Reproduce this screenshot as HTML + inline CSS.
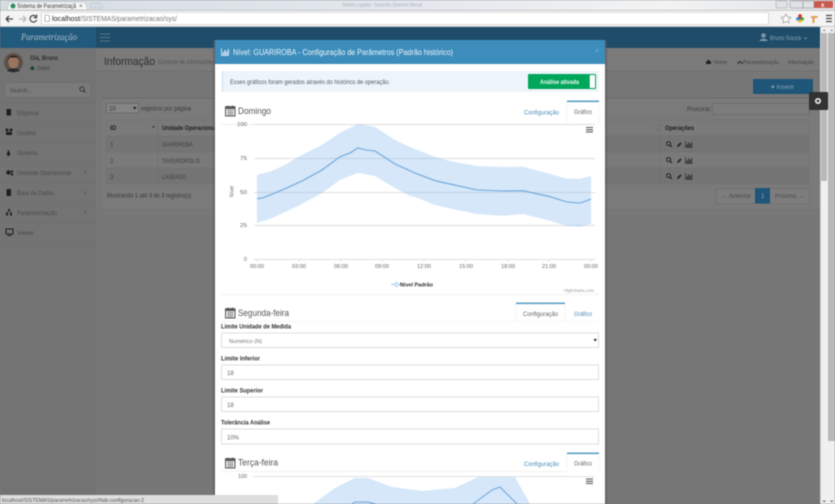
<!DOCTYPE html>
<html lang="pt"><head><meta charset="utf-8"><title>Sistema de Parametrização</title>
<style>
html,body{margin:0;padding:0;width:835px;height:504px;overflow:hidden;background:#777}
svg{display:block;filter:blur(.5px)}
text{font-family:"Liberation Sans",sans-serif;white-space:pre}
</style></head><body>
<svg xmlns="http://www.w3.org/2000/svg" width="835" height="504" viewBox="0 0 835 504">
<defs>
<linearGradient id="top" x1="0" x2="1" y1="0" y2="0"><stop offset="0" stop-color="#d6dde2"/><stop offset=".5" stop-color="#e4e8ee"/><stop offset=".8" stop-color="#f3f3f3"/><stop offset="1" stop-color="#dfe3e8"/></linearGradient>
<g id="cal"><rect x="0" y="1.2" width="9.5" height="9.3" fill="none" stroke="#555" stroke-width="1"/><rect x="0" y="1" width="9.5" height="2.6" fill="#555"/><rect x="2" y="0" width="1.2" height="2" fill="#555"/><rect x="6.3" y="0" width="1.2" height="2" fill="#555"/><path d="M1.2 5.2h7.2M1.2 7.2h7.2M1.2 9h7.2M3 4v6M4.8 4v6M6.6 4v6" stroke="#777" stroke-width=".6"/></g>
<g id="ops"><circle cx="2.6" cy="2.6" r="2" fill="none" stroke="#222" stroke-width="1"/><path d="M4 4l2 2" stroke="#222" stroke-width="1.2"/><path d="M11 6l.4-1.6 3-3 1.2 1.2-3 3z" fill="#222"/><path d="M19.5 0v6.3h7.5" fill="none" stroke="#2a2a2a" stroke-width=".7"/><path d="M21 6V3.5M22.5 6V1.5M24 6V2.8M25.5 6V1" stroke="#2a2a2a" stroke-width="1"/></g>
</defs>

<!-- page background -->
<rect width="835" height="504" fill="#777"/>

<!-- browser chrome -->
<rect width="835" height="10" fill="url(#top)"/>
<path d="M7 10l2-8h76l3 8z" fill="#f6f6f6" stroke="#a8aeb4" stroke-width=".5"/>
<path d="M90 8l1-5h9l3 5z" fill="#d3dde6" stroke="#b0b8c0" stroke-width=".4"/>
<circle cx="13" cy="6" r="2.5" fill="#2f8a63"/>
<text x="17" y="8" font-size="6" fill="#333" textLength="59" lengthAdjust="spacingAndGlyphs">Sistema de Parametrizaçã</text>
<text x="79" y="8" font-size="6" fill="#555">×</text>
<text x="342" y="6.5" font-size="5" fill="#98a0a8" textLength="80" lengthAdjust="spacingAndGlyphs" opacity=".75">Sistema Legados - Guariroba, Elemento Manual</text>
<rect y="10" width="835" height="17" fill="#f4f4f4"/>
<rect y="10" width="835" height=".7" fill="#b6b6b6"/>
<rect y="26" width="835" height="1" fill="#c8c8c8"/>
<rect x="776" y="1" width="11" height="7" rx="1" fill="#dfe3e8" stroke="#999" stroke-width=".5"/>
<rect x="790" y="1" width="13" height="7" rx="1" fill="#dfe3e8" stroke="#888" stroke-width=".5"/>
<rect x="803" y="1" width="11" height="7" fill="#dfe3e8" stroke="#888" stroke-width=".5"/>
<rect x="814" y="1" width="19" height="7" rx="1" fill="#c85a50"/>
<text x="821" y="7" font-size="6" fill="#fff" font-weight="bold">x</text>
<path d="M6 19h7M6 19l3-3M6 19l3 3" fill="none" stroke="#444" stroke-width="1.3"/>
<path d="M19 19h7M26 19l-3-3M26 19l-3 3" fill="none" stroke="#bbb" stroke-width="1.3"/>
<path d="M36 16.5a3.4 3.4 0 1 0 .6 3.5M36.6 14.6v3h-3" fill="none" stroke="#444" stroke-width="1.2"/>
<rect x="41.5" y="12.5" width="727" height="12" rx="1" fill="#fff" stroke="#c4c4c4" stroke-width=".6"/>
<path d="M45 15h3l1.5 1.5v5H45z" fill="#fff" stroke="#888" stroke-width=".6"/>
<text x="52" y="21" font-size="7.5" fill="#222" textLength="28" lengthAdjust="spacingAndGlyphs">localhost</text>
<text x="80" y="21" font-size="7.5" fill="#777" textLength="97" lengthAdjust="spacingAndGlyphs">/SISTEMAS/parametrizacao/sys/</text>
<path d="M786 14l1.5 3 3.3.4-2.4 2.3.6 3.3-3-1.6-3 1.6.6-3.3-2.4-2.3 3.3-.4z" fill="#fff" stroke="#999" stroke-width=".7"/>
<circle cx="800" cy="16" r="1.9" fill="#e4312b"/><circle cx="798" cy="19" r="1.9" fill="#3a8fe0"/><circle cx="802" cy="19" r="1.9" fill="#43b02a"/><circle cx="800" cy="21" r="1.8" fill="#f6c21c"/><circle cx="800" cy="18.6" r="1" fill="#6a2a90"/>
<path d="M811 16h6.5v2h-3v5h-2v-5h-1.5z" fill="#e0a050"/>
<path d="M826 15.5h6M826 18.5h6M826 21.5h6" stroke="#444" stroke-width="1.3"/>

<!-- top nav -->
<rect y="27" width="835" height="21" fill="#1e4c69"/>
<rect y="27" width="96" height="21" fill="#225a7e"/>
<path d="M100 34h10M100 37.5h10M100 41h10" stroke="#56788f" stroke-width="1"/>
<text x="21" y="40" font-size="9" font-style="italic" fill="#aebfca" textLength="56" lengthAdjust="spacingAndGlyphs" style="font-family:'Liberation Serif',serif">Parametrização</text>
<circle cx="763.5" cy="35.5" r="2.3" fill="#7f97a7"/><path d="M759.5 41c0-3 8-3 8 0z" fill="#7f97a7"/>
<text x="770" y="40" font-size="6.3" fill="#8ea4b3" textLength="31" lengthAdjust="spacingAndGlyphs">Bruno Souza</text>
<path d="M804 37.5l1.5 1.5 1.5-1.5" fill="none" stroke="#8ea4b3" stroke-width=".7"/>

<!-- sidebar -->
<rect y="48" width="96" height="456" fill="#737373"/>
<circle cx="13.5" cy="62.5" r="9.5" fill="#5c5148"/>
<ellipse cx="13.5" cy="62" rx="5.2" ry="6.5" fill="#9a7460"/>
<path d="M8 60c0-6 11-6 11 0l-2-2.500h-7z" fill="#2c2320"/>
<path d="M7 71c2-3.500 11-3.500 13 0l-6.500 1.500z" fill="#2b2b2f"/>
<text x="30" y="60" font-size="6.300" font-weight="bold" fill="#2e2e2e" textLength="28" lengthAdjust="spacingAndGlyphs">Olá, Bruno</text>
<circle cx="32.300" cy="68.200" r="1.800" fill="#153f29"/>
<text x="37" y="70" font-size="5.500" fill="#3c3c3c" textLength="13" lengthAdjust="spacingAndGlyphs">Online</text>
<rect x="4.500" y="82.500" width="86" height="15" fill="#7a7a7a" stroke="#6c6c6c" stroke-width=".6"/>
<text x="10" y="92.500" font-size="6.800" fill="#494949" textLength="22" lengthAdjust="spacingAndGlyphs">Search...</text>
<circle cx="82" cy="89" r="2.200" fill="none" stroke="#333" stroke-width=".9"/><path d="M83.600 90.600l2 2" stroke="#333" stroke-width="1"/>
<path d="M0 102.500h96M0 122.500h96M0 142.500h96M0 162.500h96M0 182.500h96M0 202.500h96M0 222.500h96M0 242.500h96" stroke="#6d6d6d" stroke-width=".5"/>
<g fill="#4a4a4a" font-size="6.800">
<text x="17" y="115" textLength="21" lengthAdjust="spacingAndGlyphs">Empresa</text>
<text x="17" y="135" textLength="19" lengthAdjust="spacingAndGlyphs">Usuário</text>
<text x="17" y="155" textLength="20" lengthAdjust="spacingAndGlyphs">Sistema</text>
<text x="17" y="175" textLength="54" lengthAdjust="spacingAndGlyphs">Unidade Operacional</text>
<text x="17" y="195" textLength="37" lengthAdjust="spacingAndGlyphs">Base de Dados</text>
<text x="17" y="215" textLength="40" lengthAdjust="spacingAndGlyphs">Parametrização</text>
<text x="17" y="235" textLength="17" lengthAdjust="spacingAndGlyphs">Viewer</text>
</g>
<g fill="#1f1f1f">
<rect x="6.500" y="109" width="4.500" height="6.500"/>
<circle cx="7" cy="130" r="1.500"/><circle cx="11" cy="130" r="1.500"/><rect x="6" y="132" width="6" height="3"/>
<path d="M8.500 149.500l2 5h-4z"/><rect x="7.500" y="154" width="2" height="2"/>
<circle cx="8.500" cy="172.500" r="2.200"/><circle cx="12" cy="171.500" r="1.200"/><circle cx="12" cy="174.500" r="1.200"/>
<rect x="6.500" y="189" width="4.500" height="7" rx="1"/>
<path d="M8 209h2v2H8zM6 213h2v2.500H6zM10 213h2v2.500h-2z"/><path d="M7 213v-1h4v1" fill="none" stroke="#1f1f1f" stroke-width=".6"/>
<rect x="6" y="229" width="7" height="5" fill="none" stroke="#1f1f1f"/><rect x="7.500" y="235" width="4" height="1"/>
</g>
<path d="M86 171l-1.500 1.500 1.500 1.500M86 191l-1.500 1.500 1.500 1.500M86 211l-1.500 1.500 1.500 1.500" fill="none" stroke="#505050" stroke-width=".6"/>

<!-- content header -->
<rect x="96" y="48" width="724" height="23" fill="#7a7a7a"/>
<rect x="96" y="70.500" width="724" height=".6" fill="#6c6c6c"/>
<text x="104" y="65" font-size="11" fill="#2f2f2f" textLength="51" lengthAdjust="spacingAndGlyphs">Informação</text>
<text x="158" y="64" font-size="6.300" fill="#535353" textLength="57" lengthAdjust="spacingAndGlyphs">Controle de informações</text>
<path d="M706 62l2.500-2.500 2.500 2.500v2h-5z" fill="#222"/>
<text x="714" y="64" font-size="5.500" fill="#414141" textLength="13" lengthAdjust="spacingAndGlyphs">Home</text>
<path d="M738 64v-1.500h4V64M740 60.500v2" fill="none" stroke="#333" stroke-width="1"/>
<text x="743" y="64" font-size="5.500" fill="#414141" textLength="36" lengthAdjust="spacingAndGlyphs">Parametrização</text>
<text x="788" y="64" font-size="5.500" fill="#414141" textLength="26" lengthAdjust="spacingAndGlyphs">Informação</text>

<!-- content box -->
<rect x="102" y="98" width="718" height="112" fill="#7a7a7a"/>
<rect x="102" y="97.500" width="718" height="1" fill="#686868"/>
<rect x="102" y="209.500" width="718" height=".6" fill="#707070"/>
<rect x="753" y="79" width="60" height="15" rx="1" fill="#1f5579"/>
<text x="771" y="89" font-size="6.300" fill="#8ba3b3" textLength="23" lengthAdjust="spacingAndGlyphs"><tspan font-weight="bold" fill="#b3c2cc">+</tspan> Inserir</text>

<rect x="106.500" y="103.500" width="32" height="9.500" fill="#858585" stroke="#5e5e5e" stroke-width=".6"/>
<text x="109" y="110.500" font-size="6" fill="#333">10</text>
<path d="M133 107h3.500l-1.750 2.500z" fill="#151515"/>
<text x="141" y="110.500" font-size="6.500" fill="#3a3a3a" textLength="50" lengthAdjust="spacingAndGlyphs">registros por página</text>
<text x="687" y="111" font-size="6.500" fill="#3c3c3c" textLength="25" lengthAdjust="spacingAndGlyphs">Procurar:</text>
<rect x="712.500" y="103.500" width="97" height="11" fill="#7c7c7c" stroke="#666" stroke-width=".6"/>

<rect x="106" y="120" width="703" height="64" fill="#7a7a7a" stroke="#6f6f6f" stroke-width=".6"/>
<rect x="106" y="136" width="703" height="16" fill="#747474"/>
<rect x="106" y="168" width="703" height="16" fill="#747474"/>
<path d="M106 136h703M106 152h703M106 168h703M158 120v64M660 120v64" stroke="#6c6c6c" stroke-width=".6"/>
<g font-size="6.300" font-weight="bold" fill="#202020">
<text x="110" y="130">ID</text>
<text x="162" y="130" textLength="54" lengthAdjust="spacingAndGlyphs">Unidade Operacional</text>
<text x="665" y="130" textLength="29" lengthAdjust="spacingAndGlyphs">Operações</text>
</g>
<path d="M152 127.500l1.500-2 1.500 2z" fill="#30305a"/>
<path d="M656 126.500l1-1.300 1 1.300zM656 129l1 1.300 1-1.300z" fill="#656565"/>
<g font-size="6.300" fill="#404040">
<text x="110" y="146.500">1</text><text x="110" y="163">2</text><text x="110" y="179">3</text>
<text x="162" y="146.500" textLength="31" lengthAdjust="spacingAndGlyphs">GUARIROBA</text>
<text x="162" y="163" textLength="38" lengthAdjust="spacingAndGlyphs">TAVEIROPOLIS</text>
<text x="162" y="179" textLength="24" lengthAdjust="spacingAndGlyphs">LAGEADO</text>
</g>
<use href="#ops" x="666" y="141"/><use href="#ops" x="666" y="157"/><use href="#ops" x="666" y="173"/>
<text x="107" y="197.500" font-size="6.500" fill="#3a3a3a" textLength="84" lengthAdjust="spacingAndGlyphs">Mostrando 1 até 3 de 3 registro(s)</text>
<rect x="716.500" y="188.500" width="93" height="15" fill="#7d7d7d" stroke="#6c6c6c" stroke-width=".6"/>
<rect x="755" y="188" width="15" height="15.500" fill="#1f5579"/>
<text x="721" y="198" font-size="6.300" fill="#4b4b4b" textLength="30" lengthAdjust="spacingAndGlyphs">← Anterior</text>
<text x="761" y="198" font-size="6.300" fill="#92a6b3">1</text>
<text x="775" y="198" font-size="6.300" fill="#4b4b4b" textLength="29" lengthAdjust="spacingAndGlyphs">Próximo →</text>

<!-- page / modal scrollbars -->
<rect x="820" y="27" width="15" height="477" fill="#f0f0f0"/>
<rect x="821" y="33" width="6" height="148" fill="#b9b9b9"/>
<rect x="828" y="33" width="7" height="408" fill="#b9b9b9"/>
<rect x="820" y="27" width="1" height="477" fill="#cfcfcf"/>
<path d="M823 31l1.200-1.300 1.200 1.300M830.500 31l1.200-1.300 1.200 1.300" fill="none" stroke="#777" stroke-width=".6"/>
<path d="M823 500.500l1.200 1.300 1.200-1.300M830.500 500.500l1.200 1.300 1.200-1.300" fill="none" stroke="#555" stroke-width=".8"/>
<!-- settings gear -->
<rect x="809" y="92" width="19" height="18" rx="1" fill="#323232"/>
<circle cx="818" cy="101" r="2.200" fill="none" stroke="#eee" stroke-width="1.700"/>

<!-- modal -->
<rect x="213" y="40" width="394" height="464" fill="#5a5a5a" opacity=".6"/>
<rect x="215" y="40" width="390" height="464" fill="#fff"/>
<rect x="215" y="40" width="390" height="24" fill="#3c8dbc"/>
<path d="M221.500 48.500v7h7" fill="none" stroke="#e8f1f7" stroke-width=".8"/><path d="M223.300 55v-3M225 55v-5M226.700 55v-3.500M228.400 55v-6" stroke="#e8f1f7" stroke-width="1.100"/>
<text x="233" y="55" font-size="8" fill="#eef5fa" textLength="220" lengthAdjust="spacingAndGlyphs">Nível: GUARIROBA - Configuração de Parâmetros (Padrão histórico)</text>
<text x="595" y="53" font-size="7" fill="#7fb4d4">×</text>

<rect x="222" y="71" width="377" height="21" fill="#eef5fa"/>
<rect x="222" y="71" width="1" height="21" fill="#c8dcea"/>
<text x="230" y="84" font-size="6.300" fill="#4f5b63" textLength="160" lengthAdjust="spacingAndGlyphs">Esses gráficos foram gerados através do histórico de operação.</text>
<rect x="528" y="74" width="68" height="15" rx="1" fill="#00a65a"/>
<rect x="589.500" y="74.800" width="5.800" height="13.400" fill="#fff" stroke="#1a9a60" stroke-width=".5"/>
<text x="540" y="84" font-size="6.300" font-weight="bold" fill="#eaf8f1" textLength="39" lengthAdjust="spacingAndGlyphs">Análise ativada</text>

<!-- Domingo -->
<use href="#cal" x="225.500" y="105.500"/>
<text x="238" y="114" font-size="9.500" fill="#555" textLength="33" lengthAdjust="spacingAndGlyphs">Domingo</text>
<rect x="567" y="100.500" width="32" height="1.600" fill="#5a9ec6"/>
<path d="M221 124.500h346.500M599 124.500h0" stroke="#e8e8e8" stroke-width=".7"/>
<path d="M567 102v22M599 102v22" stroke="#f2f2f2" stroke-width=".6"/>
<text x="524" y="114.500" font-size="6.500" fill="#4a8fb8" textLength="35" lengthAdjust="spacingAndGlyphs">Configuração</text>
<text x="574" y="114" font-size="6.500" fill="#666" textLength="18" lengthAdjust="spacingAndGlyphs">Gráfico</text>

<path d="M254 124.500h341M254 158.500h341M254 192.500h341M254 225.500h341M254 259.500h341" stroke="#d8d8d8" stroke-width=".8"/>
<path d="M257 259v3M299 259v3M341 259v3M382 259v3M424 259v3M466 259v3M508 259v3M549 259v3M591 259v3" stroke="#ccc" stroke-width=".5"/>
<polygon fill="#7cb5ec" fill-opacity=".32" points="257,174.700 270,171.700 285,165 298,157 322,145 340,132.700 350,128 358,124 375,127 395,140 410,147 415,149 435,157 453,161.700 477,166 503,167 523,166.700 550,174 567,178.700 580,178.700 591,176 591,224 580,226.700 567,226 550,220.700 523,214 503,215.700 477,214 453,209 435,205 415,197 410,196 395,188 375,176 358,172.700 340,180 322,193 298,206 285,212 270,219 257,222.700"/>
<polyline fill="none" stroke="#6ea6dc" stroke-width="1.100" points="257,198.700 262,198 270,195 285,188.700 302,181 322,170 340,156.700 350,153 358,148 366,150 375,151 395,164 410,170.700 415,173 435,180.700 453,184.700 477,190 490,190.500 503,191 523,190.700 550,196.700 567,202 580,203 586,201 591,199"/>
<g font-size="5.300" fill="#666">
<text x="237" y="126" textLength="10" lengthAdjust="spacingAndGlyphs">100</text>
<text x="240" y="160" textLength="7" lengthAdjust="spacingAndGlyphs">75</text>
<text x="240" y="194" textLength="7" lengthAdjust="spacingAndGlyphs">50</text>
<text x="240" y="227" textLength="7" lengthAdjust="spacingAndGlyphs">25</text>
<text x="244" y="261">0</text>
<text x="250" y="268" textLength="14" lengthAdjust="spacingAndGlyphs">00:00</text>
<text x="292" y="268" textLength="14" lengthAdjust="spacingAndGlyphs">03:00</text>
<text x="334" y="268" textLength="14" lengthAdjust="spacingAndGlyphs">06:00</text>
<text x="375" y="268" textLength="14" lengthAdjust="spacingAndGlyphs">09:00</text>
<text x="417" y="268" textLength="14" lengthAdjust="spacingAndGlyphs">12:00</text>
<text x="459" y="268" textLength="14" lengthAdjust="spacingAndGlyphs">15:00</text>
<text x="501" y="268" textLength="14" lengthAdjust="spacingAndGlyphs">18:00</text>
<text x="542" y="268" textLength="14" lengthAdjust="spacingAndGlyphs">21:00</text>
<text x="584" y="268" textLength="14" lengthAdjust="spacingAndGlyphs">00:00</text>
</g>
<text transform="translate(233.500 197) rotate(-90)" font-size="5.500" fill="#666" textLength="11" lengthAdjust="spacingAndGlyphs">Nível</text>
<path d="M586 127.500h7M586 129.800h7M586 132h7" stroke="#555" stroke-width="1.100"/>
<path d="M391 284.500h3M399 284.500h3" stroke="#7cb5ec" stroke-width=".8"/><path d="M396.500 282.300l2.200 2.200-2.200 2.200-2.200-2.200z" fill="#fff" stroke="#7cb5ec" stroke-width=".7"/>
<text x="400" y="286.500" font-size="5.800" font-weight="bold" fill="#333" textLength="33" lengthAdjust="spacingAndGlyphs">Nível Padrão</text>
<text x="564" y="292" font-size="4.500" fill="#999" textLength="30" lengthAdjust="spacingAndGlyphs">Highcharts.com</text>
<rect x="221" y="294" width="378" height=".7" fill="#ececec"/>

<!-- Segunda -->
<use href="#cal" x="225.500" y="307.500"/>
<text x="238" y="316" font-size="9.500" fill="#555" textLength="51" lengthAdjust="spacingAndGlyphs">Segunda-feira</text>
<rect x="516" y="302.500" width="49" height="1.600" fill="#5a9ec6"/>
<path d="M516 304v17M565 304v17" stroke="#f2f2f2" stroke-width=".6"/>
<path d="M221 321.500h378" stroke="#eee" stroke-width=".5"/>
<text x="523" y="316" font-size="6.500" fill="#666" textLength="35" lengthAdjust="spacingAndGlyphs">Configuração</text>
<text x="574" y="316" font-size="6.500" fill="#4a8fb8" textLength="18" lengthAdjust="spacingAndGlyphs">Gráfico</text>

<g font-size="6.300" font-weight="bold" fill="#333">
<text x="221" y="328.500" textLength="70" lengthAdjust="spacingAndGlyphs">Limite Unidade de Medida</text>
<text x="221" y="360.500" textLength="39" lengthAdjust="spacingAndGlyphs">Limite Inferior</text>
<text x="221" y="392.500" textLength="42" lengthAdjust="spacingAndGlyphs">Limite Superior</text>
<text x="221" y="424.500" textLength="49" lengthAdjust="spacingAndGlyphs">Tolerância Análise</text>
</g>
<g fill="#fff" stroke="#d6d6d6" stroke-width=".8">
<rect x="221.500" y="333" width="377" height="14.500"/>
<rect x="221.500" y="365" width="377" height="14.500"/>
<rect x="221.500" y="397" width="377" height="14.500"/>
<rect x="221.500" y="429" width="377" height="15"/>
</g>
<text x="229" y="343" font-size="5.800" fill="#777" textLength="33" lengthAdjust="spacingAndGlyphs">Numérico (N)</text>
<path d="M593.500 339h3.500l-1.750 2.500z" fill="#222"/>
<g font-size="6" fill="#666">
<text x="227" y="375">18</text>
<text x="227" y="407">18</text>
<text x="227" y="439.500">10%</text>
</g>

<!-- Terça -->
<use href="#cal" x="225.500" y="457.500"/>
<text x="238" y="465.500" font-size="9.500" fill="#555" textLength="40" lengthAdjust="spacingAndGlyphs">Terça-feira</text>
<rect x="567" y="452.500" width="32" height="1.600" fill="#5a9ec6"/>
<path d="M567 454v17M599 454v17" stroke="#f2f2f2" stroke-width=".6"/>
<path d="M221 471.500h346" stroke="#e8e8e8" stroke-width=".6"/>
<text x="524" y="466" font-size="6.500" fill="#4a8fb8" textLength="35" lengthAdjust="spacingAndGlyphs">Configuração</text>
<text x="574" y="465.500" font-size="6.500" fill="#666" textLength="18" lengthAdjust="spacingAndGlyphs">Gráfico</text>
<path d="M253 476.500h342" stroke="#d8d8d8" stroke-width=".8"/>
<text x="238" y="478" font-size="5.300" fill="#666" textLength="9" lengthAdjust="spacingAndGlyphs">100</text>
<polygon fill="#7cb5ec" fill-opacity=".32" points="313,504 335,488 355,478 368,478 392,487 422,491 455,488 478,477 515,477 530,504"/>
<path d="M352 504l3-2h13l7 2M473 504l19-14 8-3 17 17" fill="none" stroke="#6ea6dc" stroke-width="1"/>
<path d="M586 479h7M586 481.300h7M586 483.500h7" stroke="#555" stroke-width="1.100"/>

<!-- status bar -->
<rect y="495" width="278" height="9" fill="#dedede"/>
<text x="2" y="502" font-size="5.300" fill="#555" textLength="142" lengthAdjust="spacingAndGlyphs">localhost/SISTEMAS/parametrizacao/sys/#tab-configuracao-2</text>
</svg>
</body></html>
